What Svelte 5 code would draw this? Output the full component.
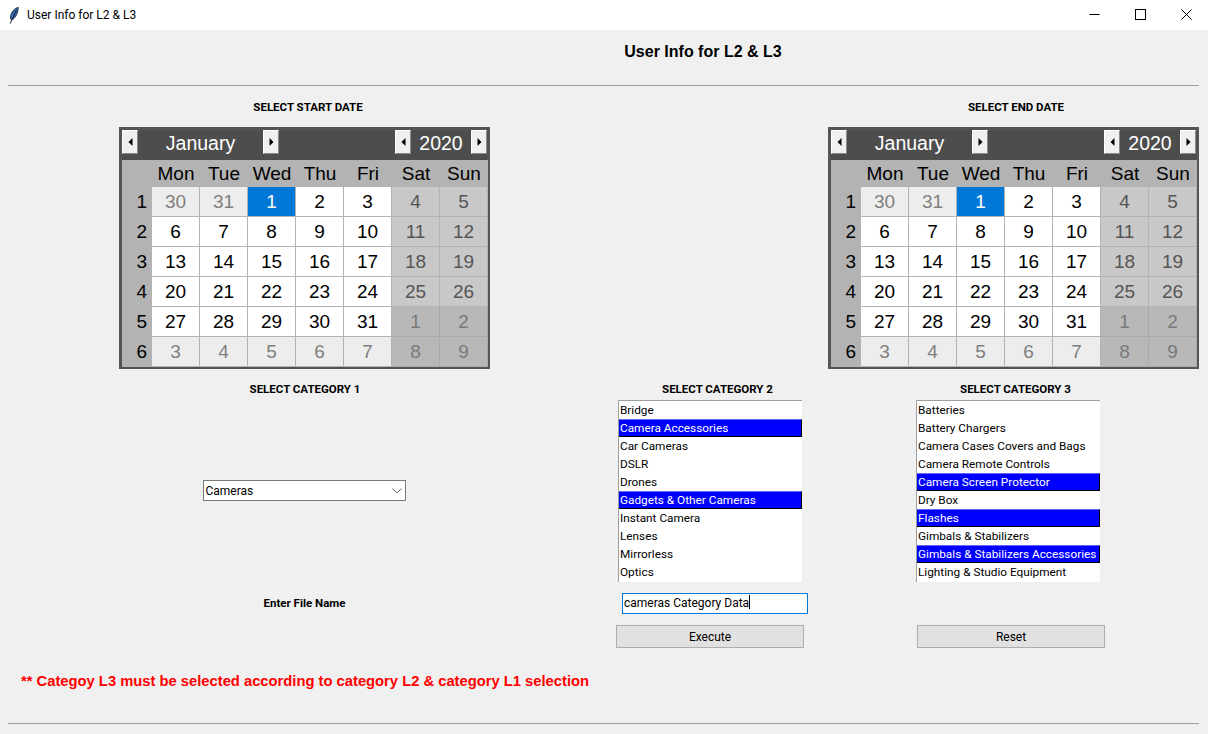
<script>
  const weekdays = ['Mon', 'Tue', 'Wed', 'Thu', 'Fri', 'Sat', 'Sun'];

  // January 2020 grid, first row starts on the last days of December
  const weeks = [
    [30, 31, 1, 2, 3, 4, 5],
    [6, 7, 8, 9, 10, 11, 12],
    [13, 14, 15, 16, 17, 18, 19],
    [20, 21, 22, 23, 24, 25, 26],
    [27, 28, 29, 30, 31, 1, 2],
    [3, 4, 5, 6, 7, 8, 9]
  ];

  function cellClass(w, d, day) {
    const other = (w === 0 && day > 20) || (w >= 4 && day < 20);
    const weekend = d >= 5;
    const selected = w === 0 && day === 1;
    return [
      'cell',
      other ? 'other' : '',
      weekend ? 'weekend' : '',
      selected ? 'selected' : ''
    ].join(' ');
  }

  const category2 = [
    { name: 'Bridge' },
    { name: 'Camera Accessories', on: true },
    { name: 'Car Cameras' },
    { name: 'DSLR' },
    { name: 'Drones' },
    { name: 'Gadgets & Other Cameras', on: true },
    { name: 'Instant Camera' },
    { name: 'Lenses' },
    { name: 'Mirrorless' },
    { name: 'Optics' }
  ];

  const category3 = [
    { name: 'Batteries' },
    { name: 'Battery Chargers' },
    { name: 'Camera Cases Covers and Bags' },
    { name: 'Camera Remote Controls' },
    { name: 'Camera Screen Protector', on: true },
    { name: 'Dry Box' },
    { name: 'Flashes', on: true },
    { name: 'Gimbals & Stabilizers' },
    { name: 'Gimbals & Stabilizers Accessories', on: true },
    { name: 'Lighting & Studio Equipment' }
  ];
</script>

{#snippet arrow(dir)}
  <button class="arrow" aria-label={dir}>
    <svg width="5" height="8" viewBox="0 0 5 8">
      {#if dir === 'prev'}
        <path d="M4.5 0 L0.5 4 L4.5 8 Z" fill="#000" />
      {:else}
        <path d="M0.5 0 L4.5 4 L0.5 8 Z" fill="#000" />
      {/if}
    </svg>
  </button>
{/snippet}

{#snippet calendar()}
  <div class="calendar">
    <div class="cal-head">
      {@render arrow('prev')}
      <span class="month">January</span>
      {@render arrow('next')}
      <span class="spacer"></span>
      {@render arrow('prev')}
      <span class="year">2020</span>
      {@render arrow('next')}
    </div>
    <div class="cal-grid">
      <span class="dow"></span>
      {#each weekdays as day}
        <span class="dow">{day}</span>
      {/each}
      {#each weeks as week, w}
        <span class="weeknum">{w + 1}</span>
        {#each week as day, d}
          <span class={cellClass(w, d, day)}>{day}</span>
        {/each}
      {/each}
    </div>
  </div>
{/snippet}

{#snippet listbox(items)}
  <ul class="listbox">
    {#each items as item}
      <li class:on={item.on}>{item.name}</li>
    {/each}
  </ul>
{/snippet}

<div class="window">
  <header class="titlebar">
    <svg class="feather" width="10" height="17" viewBox="0 0 10 17">
      <path d="M9.2 0.3 C5.8 1.2 2.6 4.4 1.6 8.8 C1.2 10.6 1.5 11.8 2.1 12.7 C5 12.3 7.5 9 8.6 5 C9.1 3 9.4 1.4 9.2 0.3 Z" fill="#3a6cb4" stroke="#10202f" stroke-width="0.8" />
      <path d="M7.6 2.8 L1.2 16.6" stroke="#10202f" stroke-width="1" fill="none" />
    </svg>
    <span class="wintitle">User Info for L2 &amp; L3</span>
    <div class="wincontrols">
      <span class="winbtn">
        <svg width="11" height="11" viewBox="0 0 11 11"><path d="M0.5 5.5 H10.5" stroke="#000" fill="none" /></svg>
      </span>
      <span class="winbtn">
        <svg width="11" height="11" viewBox="0 0 11 11"><rect x="0.5" y="0.5" width="10" height="10" stroke="#000" fill="none" /></svg>
      </span>
      <span class="winbtn">
        <svg width="11" height="11" viewBox="0 0 11 11"><path d="M0.5 0.5 L10.5 10.5 M10.5 0.5 L0.5 10.5" stroke="#000" fill="none" /></svg>
      </span>
    </div>
  </header>

  <main class="content">
    <h1 class="title">User Info for L2 &amp; L3</h1>
    <hr class="rule" />

    <div class="date-labels">
      <span class="label start-label">SELECT START DATE</span>
      <span class="label end-label">SELECT END DATE</span>
    </div>

    <div class="calendars">
      {@render calendar()}
      {@render calendar()}
    </div>

    <div class="categories">
      <div class="cat1">
        <span class="label">SELECT CATEGORY 1</span>
        <div class="select">
          <span>Cameras</span>
          <svg width="10" height="6" viewBox="0 0 10 6"><path d="M0.5 0.5 L5 5 L9.5 0.5" stroke="#666" fill="none" /></svg>
        </div>
      </div>
      <div class="cat2">
        <span class="label">SELECT CATEGORY 2</span>
        {@render listbox(category2)}
      </div>
      <div class="cat3">
        <span class="label">SELECT CATEGORY 3</span>
        {@render listbox(category3)}
      </div>
    </div>

    <div class="file-row">
      <span class="label file-label">Enter File Name</span>
      <div class="entry">cameras Category Data<span class="caret"></span></div>
    </div>

    <div class="actions">
      <button class="action execute">Execute</button>
      <button class="action reset">Reset</button>
    </div>

    <p class="warning">** Categoy L3 must be selected according to category L2 &amp; category L1 selection</p>
    <hr class="rule bottom" />
  </main>
</div>

<style>
  :global(body) {
    margin: 0;
    background: #f0f0f0;
  }

  .window {
    width: 1208px;
    height: 734px;
    overflow: hidden;
    background: #f0f0f0;
    color: #000;
    font-family: Roboto, "Noto Sans", sans-serif;
    font-size: 12px;
  }

  .titlebar {
    height: 30px;
    background: #fff;
    display: flex;
    align-items: center;
    padding-left: 9px;
    box-sizing: border-box;
  }

  .feather {
    margin-right: 8px;
  }

  .wintitle {
    font-size: 12px;
  }

  .wincontrols {
    margin-left: auto;
    display: flex;
    margin-right: -1px;
  }

  .winbtn {
    width: 46px;
    height: 30px;
    padding-bottom: 1px;
    box-sizing: border-box;
    display: flex;
    align-items: center;
    justify-content: center;
  }

  .title {
    margin: 0;
    height: 55px;
    line-height: 44px;
    padding-left: 198px;
    text-align: center;
    font-family: "Liberation Sans", Arial, sans-serif;
    font-size: 16px;
    font-weight: 700;
  }

  .rule {
    margin: 0 9px 0 8px;
    border: 0;
    height: 1px;
    background: #a0a0a0;
  }

  .label {
    font-size: 11.5px;
    font-weight: 700;
    line-height: 14px;
    white-space: nowrap;
  }

  .date-labels {
    display: grid;
    grid-template-columns: 616px 1fr;
    height: 41px;
    padding-top: 14px;
    box-sizing: border-box;
    text-align: center;
  }

  .end-label {
    width: 800px;
  }

  .calendars {
    display: flex;
    gap: 338px;
    padding-left: 119px;
  }

  .calendar {
    width: 371px;
    height: 242px;
    box-sizing: border-box;
    border: 3px solid #555;
    background: #b3b3b3;
    font-family: "Liberation Sans", Arial, sans-serif;
  }

  .cal-head {
    height: 30px;
    background: #4d4d4d;
    display: flex;
    align-items: flex-start;
    color: #fff;
    font-size: 19.5px;
    line-height: 27px;
  }

  .arrow {
    width: 16px;
    height: 24px;
    padding: 0;
    margin: 0;
    box-sizing: border-box;
    background: #f0f0f0;
    border: 1px solid;
    border-color: #fff #8a8a8a #8a8a8a #fff;
    display: flex;
    align-items: center;
    justify-content: center;
  }

  .month {
    width: 125px;
    text-align: center;
  }

  .spacer {
    flex: 1;
  }

  .year {
    width: 60px;
    text-align: center;
  }

  .cal-grid {
    display: grid;
    grid-template-columns: 30px repeat(7, 48px);
    grid-template-rows: 27px repeat(6, 30px);
    font-size: 19px;
  }

  .dow {
    display: flex;
    align-items: center;
    justify-content: center;
    background: #b3b3b3;
  }

  .weeknum {
    display: flex;
    align-items: center;
    justify-content: flex-end;
    padding-right: 5px;
    background: #b3b3b3;
  }

  .cell {
    display: flex;
    align-items: center;
    justify-content: center;
    box-sizing: border-box;
    background: #fff;
    border-right: 1px solid #b3b3b3;
    border-bottom: 1px solid #b3b3b3;
  }

  .cell.other {
    background: #ededed;
    color: #7f7f7f;
  }

  .cell.weekend {
    background: #c8c8c8;
    color: #555;
  }

  .cell.other.weekend {
    background: #b8b8b8;
    border-color: #aaa;
    color: #7a7a7a;
  }

  .cell.selected {
    background: #0078d7;
    color: #fff;
  }

  .categories {
    display: grid;
    grid-template-columns: 610px 298px 1fr;
    height: 213px;
  }

  .cat1 {
    display: flex;
    flex-direction: column;
    align-items: center;
  }

  .cat1 > .label {
    margin-top: 13px;
  }

  .select {
    width: 203px;
    height: 21px;
    margin-top: 84px;
    margin-right: 2px;
    box-sizing: border-box;
    border: 1px solid #7a7a7a;
    background: #fff;
    display: flex;
    align-items: center;
    justify-content: space-between;
    padding: 0 3px 0 2px;
  }

  .cat2,
  .cat3 {
    display: flex;
    flex-direction: column;
  }

  .cat2 > .label,
  .cat3 > .label {
    margin-top: 13px;
    width: 215px;
    text-align: center;
  }

  .listbox {
    list-style: none;
    margin: 4px 0 0 8px;
    padding: 0;
    width: 184px;
    height: 182px;
    box-sizing: border-box;
    overflow: hidden;
    background: #fff;
    border-top: 1px solid #a0a0a0;
    border-left: 1px solid #a0a0a0;
    font-size: 11.8px;
  }

  .listbox li {
    height: 18px;
    line-height: 18px;
    padding-left: 1px;
    box-sizing: border-box;
    white-space: nowrap;
  }

  .listbox li.on {
    background: #0000ff;
    color: #fff;
    border-top: 1px solid #6464f0;
    border-bottom: 1px solid #000;
    border-right: 1px solid #000;
    line-height: 16px;
  }

  .file-row {
    display: flex;
    align-items: center;
    height: 21px;
    margin-top: 11px;
  }

  .file-label {
    width: 609px;
    margin-bottom: 2px;
    text-align: center;
  }

  .entry {
    width: 186px;
    height: 21px;
    margin-left: 13px;
    box-sizing: border-box;
    border: 1px solid #0078d7;
    background: #fff;
    line-height: 19px;
    padding-left: 1px;
    white-space: nowrap;
  }

  .caret {
    display: inline-block;
    width: 1px;
    height: 14px;
    background: #000;
    vertical-align: -2px;
  }

  .actions {
    display: flex;
    margin-top: 11px;
    padding-left: 616px;
    gap: 113px;
  }

  .action {
    width: 188px;
    height: 23px;
    padding: 0;
    box-sizing: border-box;
    border: 1px solid #adadad;
    background: #e1e1e1;
    font: inherit;
    color: #000;
  }

  .warning {
    margin: 23px 0 0 21px;
    height: 20px;
    line-height: 20px;
    font-family: "Liberation Sans", Arial, sans-serif;
    font-size: 14.75px;
    font-weight: 700;
    color: #f00;
  }

  .rule.bottom {
    margin-top: 32px;
  }
</style>
